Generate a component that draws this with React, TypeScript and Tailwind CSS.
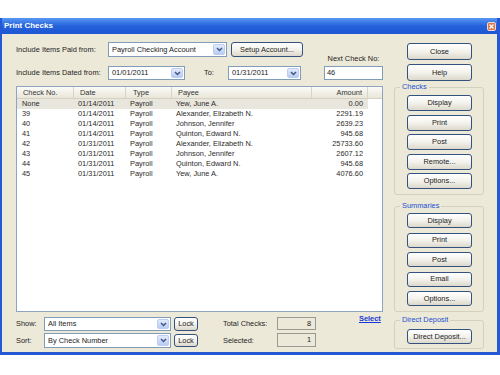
import React from "react";

const Chevron = () => (
  <svg width="7" height="5" viewBox="0 0 7 5">
    <path d="M1 1 L3.5 3.6 L6 1" fill="none" stroke="#3f5683" strokeWidth="1.4" />
  </svg>
);

const Combo = ({ text, className }: { text: string; className: string }) => (
  <div className={`flex items-stretch border border-[#7f9db9] bg-white ${className}`}>
    <div className="flex-1 flex items-center pl-[3px] text-[#222] whitespace-nowrap overflow-hidden">{text}</div>
    <div className="w-[12px] m-[1px] rounded-[2px] bg-linear-to-b from-[#e3ebfd] to-[#b7cbf3] border border-[#bccdef] flex items-center justify-center">
      <Chevron />
    </div>
  </div>
);

const Btn = ({ children, className }: { children: React.ReactNode; className: string }) => (
  <div
    className={`shrink-0 flex items-center justify-center rounded-[3px] border border-[#34527f] bg-linear-to-b from-[#ffffff] via-[#f3f2ec] to-[#dcd8cb] text-[#222] whitespace-nowrap ${className}`}
  >
    {children}
  </div>
);

const Group = ({ label, children, className }: { label: string; children: React.ReactNode; className: string }) => (
  <fieldset className={`shrink-0 border border-[#d3d0c0] rounded-[3px] ${className}`}>
    <legend className="ml-[5px] px-[2px] text-[#1a4fd0] leading-[8px]">{label}</legend>
    {children}
  </fieldset>
);

const rows = [
  ["None", "01/14/2011", "Payroll", "Yew, June A.", "0.00"],
  ["39", "01/14/2011", "Payroll", "Alexander, Elizabeth N.", "2291.19"],
  ["40", "01/14/2011", "Payroll", "Johnson, Jennifer", "2639.23"],
  ["41", "01/14/2011", "Payroll", "Quinton, Edward N.", "945.68"],
  ["42", "01/31/2011", "Payroll", "Alexander, Elizabeth N.", "25733.60"],
  ["43", "01/31/2011", "Payroll", "Johnson, Jennifer", "2607.12"],
  ["44", "01/31/2011", "Payroll", "Quinton, Edward N.", "945.68"],
  ["45", "01/31/2011", "Payroll", "Yew, June A.", "4076.60"],
];

export default function App() {
  return (
    <div className="w-[500px] h-[375px] bg-white pt-[18px] font-['Liberation_Sans',Arial,sans-serif] text-[7.4px] leading-none text-[#222]">
      <div className="w-[500px] h-[337px] flex flex-col bg-[#2458d4] pl-[2px] pr-[3px] pb-[3px]">
        {/* Title bar */}
        <div className="shrink-0 h-[16px] flex items-center justify-between bg-linear-to-b from-[#5a97f2] via-[#2462dc] to-[#1d56d2]">
          <span className="pl-[2px] text-white font-bold text-[8px]">Print Checks</span>
          <div className="mr-[1px] w-[9px] h-[9px] rounded-[2px] border border-[#f3d8cc] bg-[#d9774f] flex items-center justify-center">
            <svg width="5" height="5" viewBox="0 0 5 5">
              <path d="M0.5 0.5 L4.5 4.5 M4.5 0.5 L0.5 4.5" stroke="white" strokeWidth="1.2" />
            </svg>
          </div>
        </div>
        {/* Body */}
        <div className="flex-1 min-h-0 bg-[#ece9d8] flex">
          {/* Left column */}
          <div className="ml-[14px] w-[367px] flex flex-col pt-[8px]">
            <div className="shrink-0 flex items-end">
              <div className="w-[287px] flex flex-col">
                <div className="h-[15px] flex items-stretch">
                  <div className="w-[92px] flex items-center">Include Items Paid from:</div>
                  <Combo text="Payroll Checking Account" className="w-[119px]" />
                  <Btn className="ml-[4px] w-[72px]">Setup Account...</Btn>
                </div>
                <div className="mt-[9px] h-[14px] flex items-stretch">
                  <div className="w-[92px] flex items-center">Include Items Dated from:</div>
                  <Combo text="01/01/2011" className="w-[77px]" />
                  <div className="w-[43px] pl-[19px] flex items-center">To:</div>
                  <Combo text="01/31/2011" className="w-[73px]" />
                </div>
              </div>
              <div className="ml-[21px] w-[59px] flex flex-col">
                <div className="text-center leading-[8px] mb-[3px]">Next Check No:</div>
                <div className="h-[14px] border border-[#7f9db9] bg-white flex items-center pl-[2px]">46</div>
              </div>
            </div>
            {/* List */}
            <div className="shrink-0 mt-[6px] h-[226px] border border-[#8ea4c0] bg-white flex flex-col">
              <div className="h-[12px] flex bg-linear-to-b from-[#fbfbf8] to-[#e9e6d9] border-b border-[#d6d2c2] text-[#333]">
                <div className="w-[57px] pl-[6px] flex items-center border-r border-[#d8d5c6]">Check No.</div>
                <div className="w-[52px] pl-[6px] flex items-center border-r border-[#d8d5c6]">Date</div>
                <div className="w-[46px] pl-[7px] flex items-center border-r border-[#d8d5c6]">Type</div>
                <div className="w-[140px] pl-[6px] flex items-center border-r border-[#d8d5c6]">Payee</div>
                <div className="w-[56px] pr-[5px] flex items-center justify-end border-r border-[#d8d5c6]">Amount</div>
                <div className="flex-1" />
              </div>
              {rows.map((r, i) => (
                <div key={i} className={`h-[10px] flex items-center w-[351px] text-[#2a2a2a] ${i === 0 ? "bg-[#e8e6dd]" : ""}`}>
                  <div className="w-[57px] pl-[5px]">{r[0]}</div>
                  <div className="w-[52px] pl-[4px]">{r[1]}</div>
                  <div className="w-[46px] pl-[4px]">{r[2]}</div>
                  <div className="w-[140px] pl-[4px] whitespace-nowrap">{r[3]}</div>
                  <div className="w-[56px] pr-[5px] text-right">{r[4]}</div>
                </div>
              ))}
            </div>
            {/* Bottom rows */}
            <div className="shrink-0 mt-[5px] h-[14px] flex items-stretch">
              <div className="w-[28px] flex items-center">Show:</div>
              <Combo text="All Items" className="w-[127px]" />
              <Btn className="ml-[3px] w-[24px]">Lock</Btn>
              <div className="ml-[25px] w-[54px] flex items-center">Total Checks:</div>
              <div className="w-[39px] h-[13px] border border-[#9a9a94] flex items-center justify-end pr-[4px]">8</div>
              <div className="ml-[43px] -mt-[2px] text-[#1736d6] underline font-semibold">Select</div>
            </div>
            <div className="shrink-0 mt-[2px] h-[15px] flex items-stretch">
              <div className="w-[28px] flex items-center">Sort:</div>
              <Combo text="By Check Number" className="w-[127px]" />
              <Btn className="ml-[3px] w-[24px] my-[1px]">Lock</Btn>
              <div className="ml-[25px] w-[54px] flex items-center">Selected:</div>
              <div className="w-[39px] h-[14px] border border-[#9a9a94] flex items-center justify-end pr-[4px]">1</div>
            </div>
          </div>
          {/* Right column */}
          <div className="ml-[11px] w-[90px] flex flex-col pt-[9px]">
            <Btn className="ml-[13px] w-[65px] h-[17px]">Close</Btn>
            <Btn className="ml-[13px] w-[65px] h-[17px] mt-[4px]">Help</Btn>
            <Group label="Checks" className="mt-[2px] pb-[5px]">
              <div className="flex flex-col gap-[3.5px] pt-[4px] pl-[12px]">
                <Btn className="w-[65px] h-[16px]">Display</Btn>
                <Btn className="w-[65px] h-[16px]">Print</Btn>
                <Btn className="w-[65px] h-[16px]">Post</Btn>
                <Btn className="w-[65px] h-[16px]">Remote...</Btn>
                <Btn className="w-[65px] h-[16px]">Options...</Btn>
              </div>
            </Group>
            <Group label="Summaries" className="mt-[7px] pb-[5px]">
              <div className="flex flex-col gap-[4.5px] pt-[3px] pl-[12px]">
                <Btn className="w-[65px] h-[15px]">Display</Btn>
                <Btn className="w-[65px] h-[15px]">Print</Btn>
                <Btn className="w-[65px] h-[15px]">Post</Btn>
                <Btn className="w-[65px] h-[15px]">Email</Btn>
                <Btn className="w-[65px] h-[15px]">Options...</Btn>
              </div>
            </Group>
            <Group label="Direct Deposit" className="mt-[4px] pb-[4px]">
              <div className="flex flex-col pt-[5px] pl-[12px]">
                <Btn className="w-[65px] h-[15px]">Direct Deposit...</Btn>
              </div>
            </Group>
          </div>
        </div>
      </div>
    </div>
  );
}
